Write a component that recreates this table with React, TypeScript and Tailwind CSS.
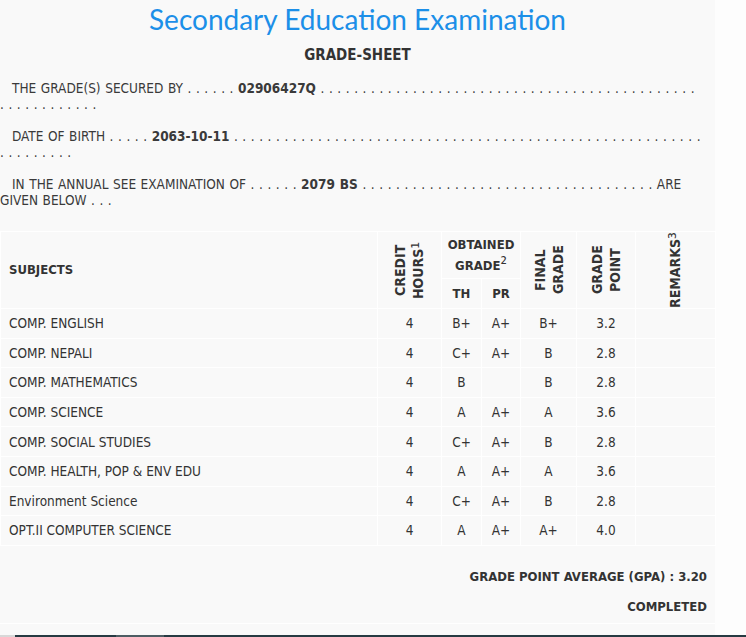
const dots = (n: number) => Array(n).fill(".").join(" ");

const rows = [
  { subject: "COMP. ENGLISH", ch: "4", th: "B+", pr: "A+", fg: "B+", gp: "3.2" },
  { subject: "COMP. NEPALI", ch: "4", th: "C+", pr: "A+", fg: "B", gp: "2.8" },
  { subject: "COMP. MATHEMATICS", ch: "4", th: "B", pr: "", fg: "B", gp: "2.8" },
  { subject: "COMP. SCIENCE", ch: "4", th: "A", pr: "A+", fg: "A", gp: "3.6" },
  { subject: "COMP. SOCIAL STUDIES", ch: "4", th: "C+", pr: "A+", fg: "B", gp: "2.8" },
  { subject: "COMP. HEALTH, POP & ENV EDU", ch: "4", th: "A", pr: "A+", fg: "A", gp: "3.6" },
  { subject: "Environment Science", ch: "4", th: "C+", pr: "A+", fg: "B", gp: "2.8" },
  { subject: "OPT.II COMPUTER SCIENCE", ch: "4", th: "A", pr: "A+", fg: "A+", gp: "4.0" },
];

function Vertical({ children, wide }: { children: React.ReactNode; wide?: boolean }) {
  return (
    <div
      className={`inline-block rotate-180 text-center align-middle text-[14px] leading-[18px] [writing-mode:vertical-rl] ${
        wide ? "h-[76px]" : "h-[60px]"
      }`}
    >
      {children}
    </div>
  );
}

export default function App() {
  const cell = "border border-white";
  const td = "h-[29.6px] border border-white p-0 leading-[16px]";
  return (
    <div className="flex h-[637px] flex-col bg-[#fdfdfd] text-[#333] [font-family:'DejaVu_Sans_Condensed','DejaVu_Sans',sans-serif]">
      <div className="flex min-h-0 flex-1">
        <div className="flex w-[715px] flex-col bg-[#f9f9f9]">
          <h1 className="mt-[3px] text-center text-[28px] leading-[32px] text-[#1c8fe8] [font-family:Lato,'Noto_Sans',sans-serif]">
            Secondary Education Examination
          </h1>
          <h2 className="mt-[10px] text-center text-[15px] font-bold leading-[20px]">GRADE-SHEET</h2>

          <div className="mt-[15px] text-[13.5px] leading-[16px] text-[#3a3a3a] [word-spacing:0.7px]">
            <p className="whitespace-nowrap pl-[12px]">
              THE GRADE(S) SECURED BY {dots(6)} <b>02906427Q</b> {dots(45)}
            </p>
            <p className="whitespace-nowrap">{dots(12)}</p>

            <p className="mt-[16px] whitespace-nowrap pl-[12px]">
              DATE OF BIRTH {dots(5)} <b>2063-10-11</b> {dots(56)}
            </p>
            <p className="whitespace-nowrap">{dots(9)}</p>

            <p className="mt-[16px] whitespace-nowrap pl-[12px]">
              IN THE ANNUAL SEE EXAMINATION OF {dots(6)} <b>2079 BS</b> {dots(35)} ARE
            </p>
            <p className="whitespace-nowrap">GIVEN BELOW . . .</p>
          </div>

          <table className="mt-[23px] w-full table-fixed border-collapse text-[13.5px]">
            <colgroup>
              <col className="w-[377px]" />
              <col className="w-[64px]" />
              <col className="w-[40px]" />
              <col className="w-[39px]" />
              <col className="w-[56px]" />
              <col className="w-[59px]" />
              <col className="w-[80px]" />
            </colgroup>
            <thead className="text-[13px] font-bold">
              <tr>
                <th rowSpan={2} className={`${cell} px-2 text-left`}>SUBJECTS</th>
                <th rowSpan={2} className={cell}>
                  <Vertical>
                    CREDIT HOURS<span className="text-[19px] font-normal leading-none">¹</span>
                  </Vertical>
                </th>
                <th colSpan={2} className={`${cell} h-[47px] leading-[20px]`}>
                  OBTAINED<br />GRADE<span className="text-[18px] font-normal leading-none">²</span>
                </th>
                <th rowSpan={2} className={cell}>
                  <Vertical>FINAL GRADE</Vertical>
                </th>
                <th rowSpan={2} className={cell}>
                  <Vertical>GRADE POINT</Vertical>
                </th>
                <th rowSpan={2} className={cell}>
                  <Vertical wide>
                    REMARKS<span className="text-[19px] font-normal leading-none">³</span>
                  </Vertical>
                </th>
              </tr>
              <tr>
                <th className={`${cell} h-[30px] leading-[16px]`}>TH</th>
                <th className={`${cell} h-[30px] leading-[16px]`}>PR</th>
              </tr>
            </thead>
            <tbody>
              {rows.map((r) => (
                <tr key={r.subject}>
                  <td className={`${td} px-2`}>{r.subject}</td>
                  <td className={`${td} text-center`}>{r.ch}</td>
                  <td className={`${td} text-center`}>{r.th}</td>
                  <td className={`${td} text-center`}>{r.pr}</td>
                  <td className={`${td} text-center`}>{r.fg}</td>
                  <td className={`${td} text-center`}>{r.gp}</td>
                  <td className={td}></td>
                </tr>
              ))}
            </tbody>
          </table>

          <div className="mt-[21px] pr-[8px] text-right text-[13px] font-bold leading-[20px]">
            GRADE POINT AVERAGE (GPA) : 3.20
          </div>
          <div className="mt-[10px] pr-[8px] text-right text-[13px] font-bold leading-[20px]">
            COMPLETED
          </div>
          <div className="mt-[6px] border-t border-white" />
        </div>
        <div className="flex-1" />
      </div>
      <div className="flex h-[2px]">
        <div className="w-[15px] bg-[#d8d8d8]" />
        <div className="w-[101px] bg-[#263a42]" />
        <div className="w-[48px] bg-[#4d5d63]" />
        <div className="flex-1 bg-[#263a42]" />
      </div>
    </div>
  );
}
